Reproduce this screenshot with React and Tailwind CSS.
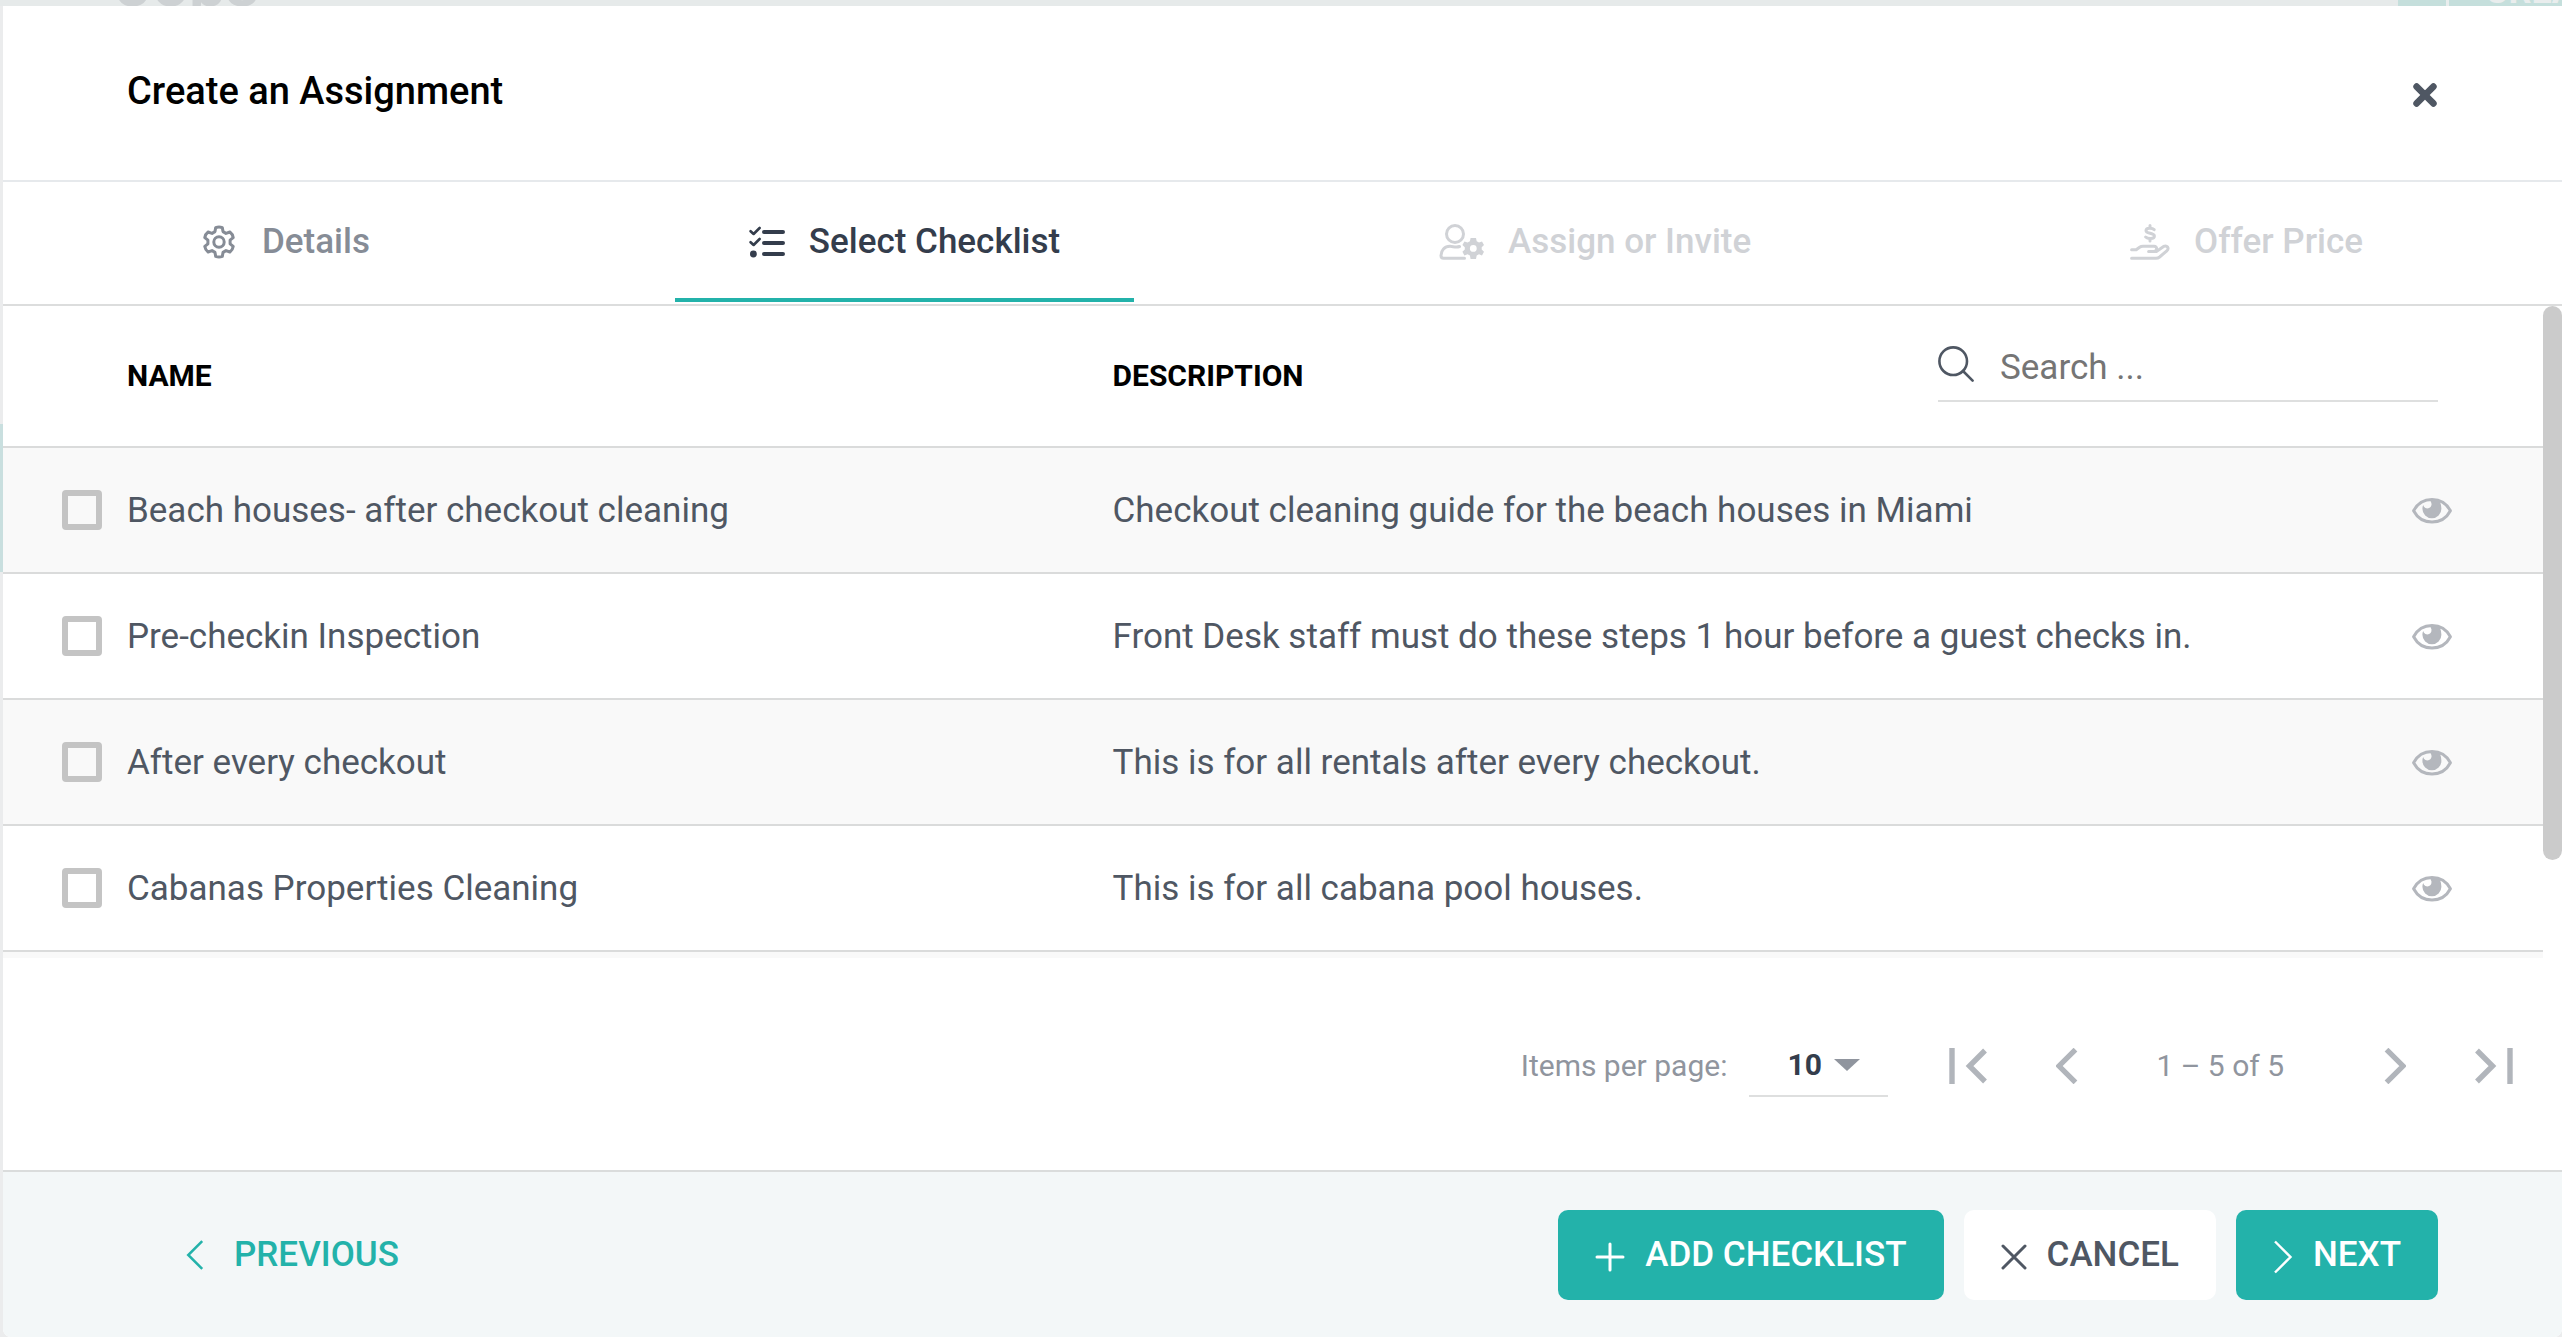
import React, { useState } from "react";

const rows = [
  { name: "Beach houses- after checkout cleaning", description: "Checkout cleaning guide for the beach houses in Miami" },
  { name: "Pre-checkin Inspection", description: "Front Desk staff must do these steps 1 hour before a guest checks in." },
  { name: "After every checkout", description: "This is for all rentals after every checkout." },
  { name: "Cabanas Properties Cleaning", description: "This is for all cabana pool houses." },
];

function GearIcon() {
  return (
    <svg className="h-[34px] w-[34px]" viewBox="0 0 34 34" fill="none" stroke="currentColor" strokeWidth="3" strokeLinejoin="round" aria-hidden="true">
      <path d="M13.7 2.6 Q17 1.2 20.3 2.6 L21 6.6 L24 8.4 L27.9 7 Q30.6 9 31.2 12.6 L28.1 15.2 V18.8 L31.2 21.4 Q30.6 25 27.9 27 L24 25.6 L21 27.4 L20.3 31.4 Q17 32.8 13.7 31.4 L13 27.4 L10 25.6 L6.1 27 Q3.4 25 2.8 21.4 L5.9 18.8 V15.2 L2.8 12.6 Q3.4 9 6.1 7 L10 8.4 L13 6.6 Z" />
      <circle cx="17" cy="17" r="5.2" />
    </svg>
  );
}

function ChecklistIcon() {
  return (
    <svg className="h-[34px] w-9" viewBox="0 0 36 34" fill="none" stroke="currentColor" strokeLinecap="round" strokeLinejoin="round" aria-hidden="true">
      <path d="M1.6 6.2 L4.6 9 L10.6 3" strokeWidth="2.6" />
      <path d="M1.6 17.2 L4.6 20 L10.6 14" strokeWidth="2.6" />
      <circle cx="4.4" cy="29" r="3.4" fill="currentColor" stroke="none" />
      <path d="M15 7 H34 M15 18 H34 M15 29 H34" strokeWidth="4" />
    </svg>
  );
}

function UserGearIcon() {
  return (
    <svg className="h-9 w-[45px]" viewBox="0 0 45 36" fill="none" stroke="currentColor" strokeWidth="3" strokeLinecap="round" strokeLinejoin="round" aria-hidden="true">
      <circle cx="16" cy="10" r="8.5" />
      <path d="M20.5 22.5 C17 24 14 22.3 11 22.3 C5.5 22.3 2 26.5 2 31.5 Q2 34.3 4.6 34.3 H25.5" />
      <g fill="currentColor" stroke="none">
        <path fillRule="evenodd" d="M31.6 14 H37 L37.7 17.3 L40 18.6 L43 17.4 L45 21 L42.7 23.2 V25.6 L45 27.8 L43 31.4 L40 30.2 L37.7 31.6 L37 35 H31.6 L30.9 31.6 L28.6 30.2 L25.4 31.4 L23.4 27.8 L25.8 25.6 V23.2 L23.4 21 L25.4 17.4 L28.6 18.6 L30.9 17.3 Z M34.3 21 A3.4 3.4 0 1 0 34.3 27.8 A3.4 3.4 0 1 0 34.3 21 Z" />
      </g>
    </svg>
  );
}

function HandDollarIcon() {
  return (
    <svg className="h-9 w-10" viewBox="0 0 40 36" fill="none" stroke="currentColor" strokeWidth="3" strokeLinecap="round" strokeLinejoin="round" aria-hidden="true">
      <path d="M20 1.6 V4 M20 14.6 V17 M24.2 5.6 C22.5 4 16 3.4 16 6.8 C16 10 24.4 8.6 24.4 12 C24.4 15.4 17.6 15 15.6 13" />
      <path d="M1.6 25.8 H6.2 L9.6 23.2 Q11 22.2 13 22.2 H24 Q26.8 22.4 26.6 24.8 Q26.4 27.6 23.6 27.6 H18.6" />
      <path d="M26.4 27.4 L33.6 22.4 Q36.2 21.2 37.6 23 Q38.8 25 36.8 26.8 L29.6 33 Q28 34.3 26 34.3 H1.6" />
    </svg>
  );
}

function SearchIcon() {
  return (
    <svg className="h-9 w-9 shrink-0" viewBox="0 0 36 36" fill="none" stroke="currentColor" strokeWidth="2.6" strokeLinecap="round" aria-hidden="true">
      <circle cx="15.2" cy="15.2" r="13.8" />
      <path d="M25 25 L34.6 34.6" />
    </svg>
  );
}

function EyeIcon() {
  return (
    <svg className="h-[26px] w-10" viewBox="0 0 40 26" aria-hidden="true">
      <path d="M1.6 12.8 C9.5 -2.2 30.5 -2.2 38.4 12.8 C30.5 27.8 9.5 27.8 1.6 12.8 Z" fill="none" stroke="currentColor" strokeWidth="3" strokeLinejoin="round" />
      <path fill="currentColor" d="M19 2.4 H27.6 Q29.4 7 29.4 10.8 A9.5 9.5 0 0 1 10.4 10.8 Q10.4 8.6 11.2 7 A4.2 4.2 0 1 0 18.6 3.6 Z" />
    </svg>
  );
}

function Chevron({ flip, className, width }) {
  return (
    <svg className={className} viewBox="0 0 20 34" fill="none" stroke="currentColor" strokeWidth={width} aria-hidden="true">
      <path d={flip ? "M2 1.5 L17.5 17 L2 32.5" : "M18 1.5 L2.5 17 L18 32.5"} />
    </svg>
  );
}

function EdgeChevron({ flip }) {
  return (
    <svg className="h-9 w-10" viewBox="0 0 40 36" fill="none" stroke="currentColor" strokeWidth="5.4" aria-hidden="true">
      <path d={flip ? "M36 0 V36 M3 2.5 L18.5 18 L3 33.5" : "M4 0 V36 M37 2.5 L21.5 18 L37 33.5"} />
    </svg>
  );
}

const tabs = [
  { label: "Details", Icon: GearIcon, style: "text-[#868c96]", gap: "gap-[26px]" },
  { label: "Select Checklist", Icon: ChecklistIcon, style: "border-[#23b2aa] text-[#343d4c]", gap: "gap-6", active: true },
  { label: "Assign or Invite", Icon: UserGearIcon, style: "text-[#d0d2d6]", gap: "gap-6", disabled: true },
  { label: "Offer Price", Icon: HandDollarIcon, style: "text-[#d0d2d6]", gap: "gap-6", disabled: true },
];

export default function App() {
  const [query, setQuery] = useState("");
  return (
    <div className="flex min-h-screen flex-col bg-[#ebeced] font-[Roboto,sans-serif]">
      <div className="flex h-[6px] items-end justify-between overflow-hidden bg-[#e6eaea] pl-[116px]" aria-hidden="true">
        <span className="h-[54px] text-[65px] leading-[64px] font-bold text-[#cdd1d3]">Jobs</span>
        <span className="flex h-[33px] w-[164px] shrink-0 overflow-hidden bg-[#c5dfdc] text-[36px] leading-[36px] font-bold text-[#e9eded]">
          <span className="mr-9 ml-12 h-full w-[3px] shrink-0 bg-[#e9eded]" />
          CREATE
        </span>
      </div>

      <div className="flex flex-1">
        <div className="flex w-[3px] flex-col" aria-hidden="true">
          <span className="mt-[418px] h-[148px] bg-[#c9dfdf]" />
        </div>

        <section className="flex min-w-0 flex-1 flex-col overflow-hidden rounded-b-lg bg-white" role="dialog" aria-labelledby="dialog-title">
          <header className="flex h-[176px] items-center justify-between border-b-2 border-[#e6e9ec] pr-[125px] pb-1 pl-[124px]">
            <h1 id="dialog-title" className="text-[38px] leading-10 font-medium text-black">Create an Assignment</h1>
            <button type="button" aria-label="Close" className="mt-2 text-[#4f5763]">
              <svg className="h-6 w-6" viewBox="0 0 24 24" fill="none" stroke="currentColor" strokeWidth="6.6" strokeLinecap="round" aria-hidden="true">
                <path d="M3.6 3.6 L20.4 20.4 M20.4 3.6 L3.6 20.4" />
              </svg>
            </button>
          </header>

          <nav className="flex h-[124px] justify-between border-b-2 border-[#dcdddd] pr-[125px] pb-[2px] pl-[125px]" role="tablist">
            {tabs.map(({ label, Icon, style, gap, active, disabled }) => (
              <button
                key={label}
                type="button"
                role="tab"
                aria-selected={!!active}
                disabled={disabled}
                className={`flex items-center border-b-4 px-[74px] pt-1 text-[35px] leading-10 font-medium ${active ? "" : "border-transparent"} ${gap} ${style}`}
              >
                <Icon />
                {label}
              </button>
            ))}
          </nav>

          <div className="flex flex-1 items-start">
            <div className="min-w-0 flex-1">
              <table className="w-full table-fixed border-collapse text-left text-[#4f5763]">
                <colgroup>
                  <col className="w-[124px]" />
                  <col className="w-[38.8%]" />
                  <col />
                  <col className="w-[455px]" />
                  <col className="w-[150px]" />
                </colgroup>
                <thead>
                  <tr className="h-[141px] border-b-2 border-[#dadbdb] text-[30px] leading-9 text-black">
                    <td />
                    <th scope="col" className="font-bold">NAME</th>
                    <th scope="col" className="font-bold">DESCRIPTION</th>
                    <td colSpan={2} className="pr-[105px] align-top">
                      <label className="mt-6 flex h-[72px] items-center gap-[26px] border-b-2 border-[#dedfdf] pb-[2px] text-[#4f5763]">
                        <SearchIcon />
                        <input
                          type="search"
                          aria-label="Search"
                          placeholder="Search ..."
                          value={query}
                          onChange={(e) => setQuery(e.target.value)}
                          className="mt-2 w-full min-w-0 bg-transparent text-[35px] leading-10 outline-none placeholder:text-[#757575]"
                        />
                      </label>
                    </td>
                  </tr>
                </thead>
                <tbody>
                  {rows.map((row, i) => (
                    <tr key={row.name} className="h-[126px] border-b-2 border-[#dadbdb] text-[35px] leading-10 odd:bg-[#f9f9f9]">
                      <td className="pl-[59px] align-middle">
                        <input
                          id={`checklist-${i}`}
                          type="checkbox"
                          className="block h-10 w-10 appearance-none rounded-[4px] border-[6px] border-[#c4c4c4] checked:bg-[#23b2aa]"
                        />
                      </td>
                      <td className="pt-[2px]"><label htmlFor={`checklist-${i}`}>{row.name}</label></td>
                      <td colSpan={2} className="pt-[2px]">{row.description}</td>
                      <td className="pt-[2px] pl-[19px]">
                        <button type="button" aria-label={`View ${row.name}`} className="block text-[#b4b7bd]">
                          <EyeIcon />
                        </button>
                      </td>
                    </tr>
                  ))}
                </tbody>
              </table>
              <div className="h-[6px] bg-[#f9f9f9]" />
            </div>
            <div className="h-[554px] w-[19px] rounded-full bg-[#cbcbcb]" aria-hidden="true" />
          </div>

          <div className="flex h-[210px] items-center justify-end pt-[2px] pr-12 text-[30px] leading-9 text-[#90959e]">
            <label htmlFor="page-size">Items per page:</label>
            <span className="relative mr-[60px] ml-[22px] flex items-center border-b-2 border-[#dedfdf] text-[#343d4c]">
              <select id="page-size" className="h-[60px] w-[139px] appearance-none bg-transparent pl-[38px] font-bold outline-none" defaultValue="10">
                <option>10</option>
                <option>25</option>
                <option>50</option>
              </select>
              <svg className="pointer-events-none absolute right-7 h-3 w-[26px] text-[#90959e]" viewBox="0 0 26 12" fill="currentColor" aria-hidden="true">
                <path d="M0 0 H26 L13 12 Z" />
              </svg>
            </span>
            <button type="button" aria-label="First page" className="text-[#b1b5bb]"><EdgeChevron /></button>
            <button type="button" aria-label="Previous page" className="ml-[68px] text-[#b1b5bb]"><Chevron className="h-9 w-[22px]" width="5" /></button>
            <span className="mr-[100px] ml-[78px]">1 – 5 of 5</span>
            <button type="button" aria-label="Next page" className="text-[#b1b5bb]"><Chevron flip className="h-9 w-[22px]" width="5" /></button>
            <button type="button" aria-label="Last page" className="ml-[68px] text-[#b1b5bb]"><EdgeChevron flip /></button>
          </div>

          <footer className="flex h-[167px] items-center justify-between border-t-2 border-[#dadcdc] bg-[#f3f7f8] pr-[124px] pl-[183px] text-[35px] leading-10 font-medium">
            <button type="button" className="flex items-center gap-[30px] text-[#23b2aa]">
              <Chevron className="h-8 w-[18px]" width="2.8" />
              PREVIOUS
            </button>
            <div className="flex gap-5">
              <button type="button" className="flex h-[90px] items-center gap-5 rounded-[10px] bg-[#23b2aa] px-[37px] text-white">
                <svg className="mt-1 h-[30px] w-[30px]" viewBox="0 0 30 30" stroke="currentColor" strokeWidth="3" strokeLinecap="round" aria-hidden="true">
                  <path d="M15 2 V28 M2 15 H28" />
                </svg>
                ADD CHECKLIST
              </button>
              <button type="button" className="flex h-[90px] items-center gap-5 rounded-[10px] bg-white px-[37px] text-[#4f5763]">
                <svg className="mt-1 h-[26px] w-[26px]" viewBox="0 0 26 26" stroke="currentColor" strokeWidth="3" strokeLinecap="round" aria-hidden="true">
                  <path d="M2 2 L24 24 M24 2 L2 24" />
                </svg>
                CANCEL
              </button>
              <button type="button" className="flex h-[90px] items-center gap-5 rounded-[10px] bg-[#23b2aa] px-[37px] text-white">
                <Chevron flip className="mt-1 h-[34px] w-5" width="2.4" />
                NEXT
              </button>
            </div>
          </footer>
        </section>
      </div>
    </div>
  );
}
